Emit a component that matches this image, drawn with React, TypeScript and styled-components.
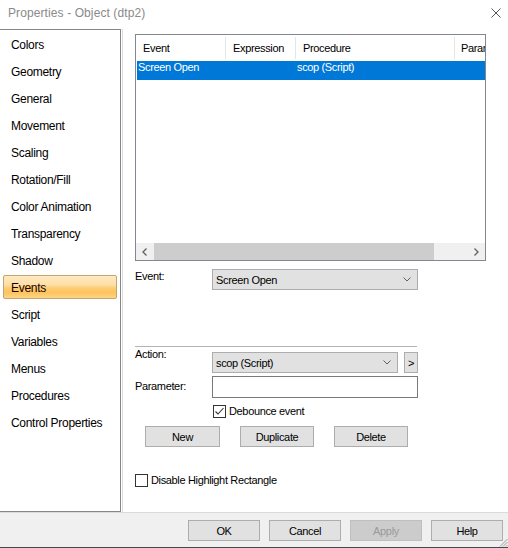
import React from "react";
import styled, { createGlobalStyle, css } from "styled-components";

const GlobalStyle = createGlobalStyle`
  html, body { margin: 0; padding: 0; background: #ffffff; }
  body { width: 508px; height: 548px; overflow: hidden; font-family: "Liberation Sans", Arial, sans-serif; }
  * { box-sizing: border-box; }
`;

const Window = styled.div`
  width: 508px;
  height: 548px;
  display: flex;
  flex-direction: column;
  background: #ffffff;
  position: relative;
`;

const TitleBar = styled.div`
  height: 29px;
  display: flex;
  justify-content: space-between;
  align-items: flex-start;
  padding: 7px 8px 0 8px;
`;

const Title = styled.div`
  font-size: 12px;
  line-height: 13px;
  letter-spacing: 0.1px;
  color: #8a8a8a;
`;

const CloseIcon = styled.svg`
  margin-top: 1px;
  margin-right: -1px;
`;

const Body = styled.div`
  height: 483px;
  display: flex;
`;

const Sidebar = styled.div`
  width: 121px;
  border: 1px solid #858585;
  border-left: none;
  padding-top: 2px;
  display: flex;
  flex-direction: column;
  gap: 3px;
`;

const NavItem = styled.div<{ $active?: boolean }>`
  height: 24px;
  width: 114px;
  margin-left: 3px;
  padding: 2px 0 0 7px;
  border: 1px solid transparent;
  border-radius: 2px;
  display: flex;
  align-items: center;
  font-size: 12px;
  letter-spacing: -0.3px;
  color: #000;
  ${(p) =>
    p.$active &&
    css`
      border-color: #c6a46c;
      background: linear-gradient(
        to bottom,
        #fee9c4 0%,
        #fedfa6 40%,
        #fdcc74 55%,
        #fcc45e 75%,
        #fdd585 100%
      );
      color: #1a0000;
    `}
`;

const Content = styled.div`
  flex: 1;
  margin-left: 1px;
  border-left: 1px solid #dcdcdc;
  padding: 5px 0 0 12px;
  display: flex;
  flex-direction: column;
  font-size: 11px;
  letter-spacing: -0.35px;
  color: #000;
`;

const ListView = styled.div`
  width: 351px;
  height: 227px;
  border: 1px solid #828790;
  display: flex;
  flex-direction: column;
  overflow: hidden;
`;

const ListHeader = styled.div`
  height: 26px;
  display: grid;
  grid-template-columns: 90px 70px 159px 1fr;
  align-items: center;
  flex-shrink: 0;
`;

const HeaderCell = styled.div<{ $last?: boolean }>`
  height: 22px;
  display: flex;
  align-items: center;
  white-space: nowrap;
  overflow: hidden;
  border-right: ${(p) => (p.$last ? "none" : "1px solid #e5e5e5")};
  padding-left: ${(p) => (p.$last ? "6px" : "7px")};
`;

const Row = styled.div<{ $selected?: boolean }>`
  height: 19px;
  margin-left: 1px;
  display: grid;
  grid-template-columns: 89px 70px 159px 1fr;
  line-height: 13px;
  background: ${(p) => (p.$selected ? "#0078d7" : "transparent")};
  color: ${(p) => (p.$selected ? "#ffffff" : "#000")};
  flex-shrink: 0;
`;

const RowCell = styled.div`
  padding-left: 1px;
  white-space: nowrap;
  overflow: hidden;
`;

const ScrollBar = styled.div`
  margin-top: auto;
  height: 17px;
  display: flex;
  background: #f0f0f0;
  flex-shrink: 0;
`;

const ScrollArrow = styled.div`
  width: 17px;
  display: flex;
  align-items: center;
  justify-content: center;
`;

const ScrollTrack = styled.div`
  flex: 1;
  padding-left: 1px;
  display: flex;
`;

const ScrollThumb = styled.div`
  width: 280px;
  background: #cdcdcd;
`;

const FieldRow = styled.div<{ $mt: number }>`
  display: flex;
  align-items: flex-start;
  margin-top: ${(p) => p.$mt}px;
`;

const Label = styled.div<{ $offset: number }>`
  width: 77px;
  line-height: 13px;
  margin-top: ${(p) => p.$offset}px;
  white-space: nowrap;
`;

const Select = styled.div<{ $width: number }>`
  width: ${(p) => p.$width}px;
  height: 21px;
  border: 1px solid #adadad;
  background: #e1e1e1;
  display: flex;
  align-items: center;
  justify-content: space-between;
  padding: 0 6px 0 3px;
`;

const SmallButton = styled.div`
  width: 14px;
  height: 21px;
  margin-left: 6px;
  border: 1px solid #adadad;
  background: #e1e1e1;
  display: flex;
  align-items: center;
  justify-content: center;
  font-size: 11px;
`;

const TextInput = styled.div`
  width: 206px;
  height: 22px;
  border: 1px solid #7a7a7a;
  background: #ffffff;
`;

const Separator = styled.div`
  margin-top: 56px;
  width: 282px;
  height: 1px;
  background: #b4b4b4;
`;

const CheckRow = styled.div<{ $mt: number; $ml: number }>`
  display: flex;
  align-items: center;
  gap: 3px;
  margin-top: ${(p) => p.$mt}px;
  margin-left: ${(p) => p.$ml}px;
  line-height: 13px;
`;

const CheckBox = styled.div`
  width: 13px;
  height: 13px;
  border: 1px solid #333333;
  background: #ffffff;
  display: flex;
  align-items: center;
  justify-content: center;
`;

const ButtonRow = styled.div`
  display: flex;
  gap: 20px;
  margin-top: 8px;
  margin-left: 10px;
`;

const Button = styled.div<{ $width?: number; $disabled?: boolean }>`
  width: ${(p) => p.$width ?? 72}px;
  height: 21px;
  border: 1px solid ${(p) => (p.$disabled ? "#bfbfbf" : "#adadad")};
  background: ${(p) => (p.$disabled ? "#cccccc" : "#e1e1e1")};
  color: ${(p) => (p.$disabled ? "#9a9a9a" : "#000")};
  display: flex;
  align-items: center;
  justify-content: center;
  font-size: 11px;
  letter-spacing: -0.35px;
  font-family: "Liberation Sans", Arial, sans-serif;
`;

const Footer = styled.div`
  height: 36px;
  border-top: 1px solid #dadada;
  border-bottom: 1px solid #474747;
  background: #f0f0f0;
  display: flex;
  justify-content: flex-end;
  align-items: flex-start;
  padding: 7px 5px 0 0;
  gap: 9px;
  position: relative;
`;

const Grip = styled.svg`
  position: absolute;
  right: 0;
  bottom: 0;
`;

const navItems = [
  "Colors",
  "Geometry",
  "General",
  "Movement",
  "Scaling",
  "Rotation/Fill",
  "Color Animation",
  "Transparency",
  "Shadow",
  "Events",
  "Script",
  "Variables",
  "Menus",
  "Procedures",
  "Control Properties",
];

const Chevron = () => (
  <svg width="8" height="5" viewBox="0 0 8 5">
    <polyline points="0.5,0.5 4,4 7.5,0.5" fill="none" stroke="#606060" strokeWidth="1" />
  </svg>
);

const Check = () => (
  <svg width="11" height="11" viewBox="0 0 11 11">
    <polyline points="1.5,5.5 4,8 9.5,2" fill="none" stroke="#333333" strokeWidth="1.1" />
  </svg>
);

export default function App() {
  return (
    <>
      <GlobalStyle />
      <Window>
        <TitleBar>
          <Title>Properties - Object (dtp2)</Title>
          <CloseIcon width="10" height="10" viewBox="0 0 10 10">
            <path d="M0.5 0.5 L9.5 9.5 M9.5 0.5 L0.5 9.5" stroke="#555555" strokeWidth="1" />
          </CloseIcon>
        </TitleBar>
        <Body>
          <Sidebar>
            {navItems.map((n) => (
              <NavItem key={n} $active={n === "Events"}>
                {n}
              </NavItem>
            ))}
          </Sidebar>
          <Content>
            <ListView>
              <ListHeader>
                <HeaderCell>Event</HeaderCell>
                <HeaderCell>Expression</HeaderCell>
                <HeaderCell>Procedure</HeaderCell>
                <HeaderCell $last>Parameter</HeaderCell>
              </ListHeader>
              <Row $selected>
                <RowCell>Screen Open</RowCell>
                <RowCell />
                <RowCell>scop (Script)</RowCell>
                <RowCell />
              </Row>
              <ScrollBar>
                <ScrollArrow>
                  <svg width="5" height="8" viewBox="0 0 5 8">
                    <polyline points="4.5,0.5 1,4 4.5,7.5" fill="none" stroke="#606060" strokeWidth="1.3" />
                  </svg>
                </ScrollArrow>
                <ScrollTrack>
                  <ScrollThumb />
                </ScrollTrack>
                <ScrollArrow>
                  <svg width="5" height="8" viewBox="0 0 5 8">
                    <polyline points="0.5,0.5 4,4 0.5,7.5" fill="none" stroke="#606060" strokeWidth="1.3" />
                  </svg>
                </ScrollArrow>
              </ScrollBar>
            </ListView>

            <FieldRow $mt={8}>
              <Label $offset={1}>Event:</Label>
              <Select $width={206}>
                <span>Screen Open</span>
                <Chevron />
              </Select>
            </FieldRow>

            <Separator />

            <FieldRow $mt={5}>
              <Label $offset={-4}>Action:</Label>
              <Select $width={186}>
                <span>scop (Script)</span>
                <Chevron />
              </Select>
              <SmallButton>&gt;</SmallButton>
            </FieldRow>

            <FieldRow $mt={3}>
              <Label $offset={4}>Parameter:</Label>
              <TextInput />
            </FieldRow>

            <CheckRow $mt={7} $ml={78}>
              <CheckBox>
                <Check />
              </CheckBox>
              <span>Debounce event</span>
            </CheckRow>

            <ButtonRow>
              <Button $width={75}>New</Button>
              <Button $width={74}>Duplicate</Button>
              <Button $width={74}>Delete</Button>
            </ButtonRow>

            <CheckRow $mt={27} $ml={0}>
              <CheckBox />
              <span>Disable Highlight Rectangle</span>
            </CheckRow>
          </Content>
        </Body>
        <Footer>
          <Button>OK</Button>
          <Button>Cancel</Button>
          <Button $disabled>Apply</Button>
          <Button>Help</Button>
          <Grip width="10" height="10" viewBox="0 0 10 10">
            <path d="M9.5 2 L2 9.5 M9.5 5 L5 9.5 M9.5 8 L8 9.5" stroke="#9a9a9a" strokeWidth="1" />
          </Grip>
        </Footer>
      </Window>
    </>
  );
}
